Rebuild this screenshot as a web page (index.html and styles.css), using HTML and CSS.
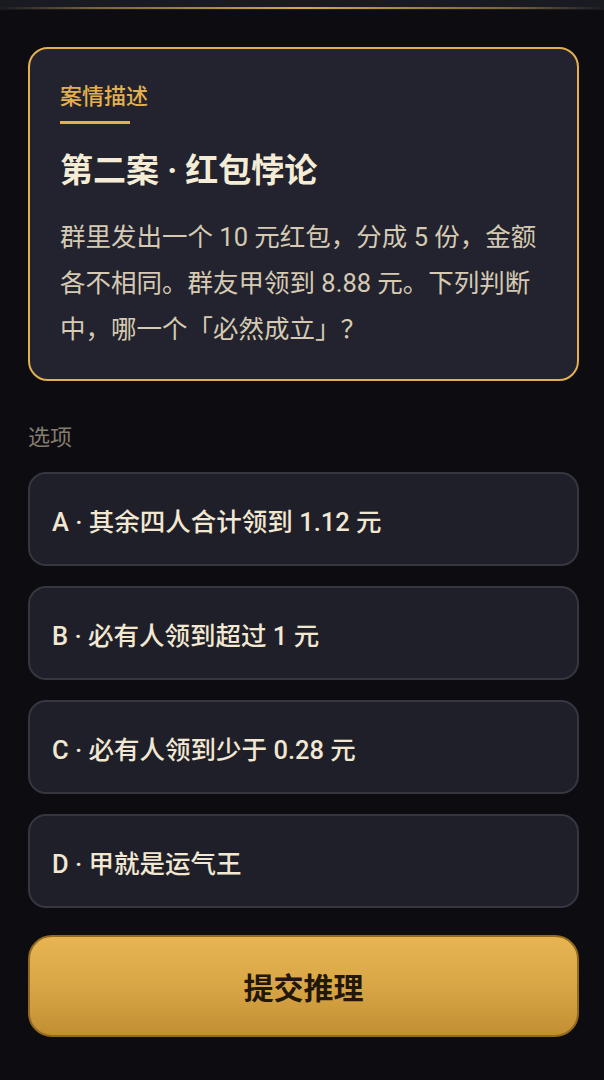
FILE: index.html
```html
<!DOCTYPE html>
<html lang="zh-CN">
<head>
<meta charset="utf-8">
<link rel="stylesheet" href="styles.css">
</head>
<body>
<div class="topbar"><div class="topline"></div></div>
<main class="page">
  <section class="case-card">
    <div class="case-label">案情描述</div>
    <div class="case-underline"></div>
    <h1 class="case-title">第二案 · 红包悖论</h1>
    <p class="case-body">群里发出一个 10 元红包，分成 5 份，金额各不相同。群友甲领到 8.88 元。下列判断中，哪一个「必然成立」？</p>
  </section>
  <div class="options-label">选项</div>
  <div class="options">
    <button class="option">A · 其余四人合计领到 1.12 元</button>
    <button class="option">B · 必有人领到超过 1 元</button>
    <button class="option">C · 必有人领到少于 0.28 元</button>
    <button class="option">D · 甲就是运气王</button>
  </div>
  <button class="submit">提交推理</button>
</main>
</body>
</html>
```

FILE: styles.css
```css
* { box-sizing: border-box; }
html, body {
  margin: 0;
  padding: 0;
  background: #0c0c11;
  font-family: Roboto, "Noto Sans CJK SC", sans-serif;
}
.topbar {
  height: 10px;
  background: #1a1b22;
  position: relative;
}
.topline {
  position: absolute;
  left: 0;
  right: 0;
  top: 7px;
  height: 2px;
  background: linear-gradient(90deg, rgba(200,160,80,0) 0%, rgba(160,130,70,0.7) 15%, #d6a84c 50%, rgba(160,130,70,0.7) 85%, rgba(200,160,80,0) 100%);
}
.page {
  padding: 37px 25px 40px 28px;
  display: flex;
  flex-direction: column;
}
.case-card {
  border: 2px solid #e2b04e;
  border-radius: 20px;
  background: #22232e;
  padding: 34px 28px 27px 30px;
}
.case-label {
  color: #e2b04e;
  font-size: 22px;
  line-height: 28px;
  font-weight: 500;
}
.case-underline {
  width: 70px;
  height: 3px;
  background: #e2b04e;
  margin-top: 10px;
}
.case-title {
  margin: 24px 0 0;
  font-size: 33px;
  line-height: 46px;
  font-weight: 700;
  color: #f5ecd6;
}
.case-body {
  margin: 20px 0 0;
  font-size: 25.5px;
  line-height: 46px;
  color: #d6cab2;
}
.options-label {
  margin-top: 43px;
  font-size: 22px;
  line-height: 28px;
  color: #857c6c;
}
.options {
  margin-top: 20px;
  display: flex;
  flex-direction: column;
  gap: 20px;
}
.option {
  height: 94px;
  border: 2px solid #363641;
  border-radius: 18px;
  background: #1f1f29;
  padding: 0 22px;
  text-align: left;
  font-family: inherit;
  font-size: 25.5px;
  font-weight: 500;
  color: #f2e8d2;
}
.submit {
  margin-top: 27px;
  height: 102px;
  border: 2px solid #94691f;
  border-radius: 24px;
  background: linear-gradient(180deg, #e6b552 0%, #d9a646 50%, #c18e32 100%);
  font-family: inherit;
  font-size: 30px;
  font-weight: 700;
  color: #22170a;
}
```
